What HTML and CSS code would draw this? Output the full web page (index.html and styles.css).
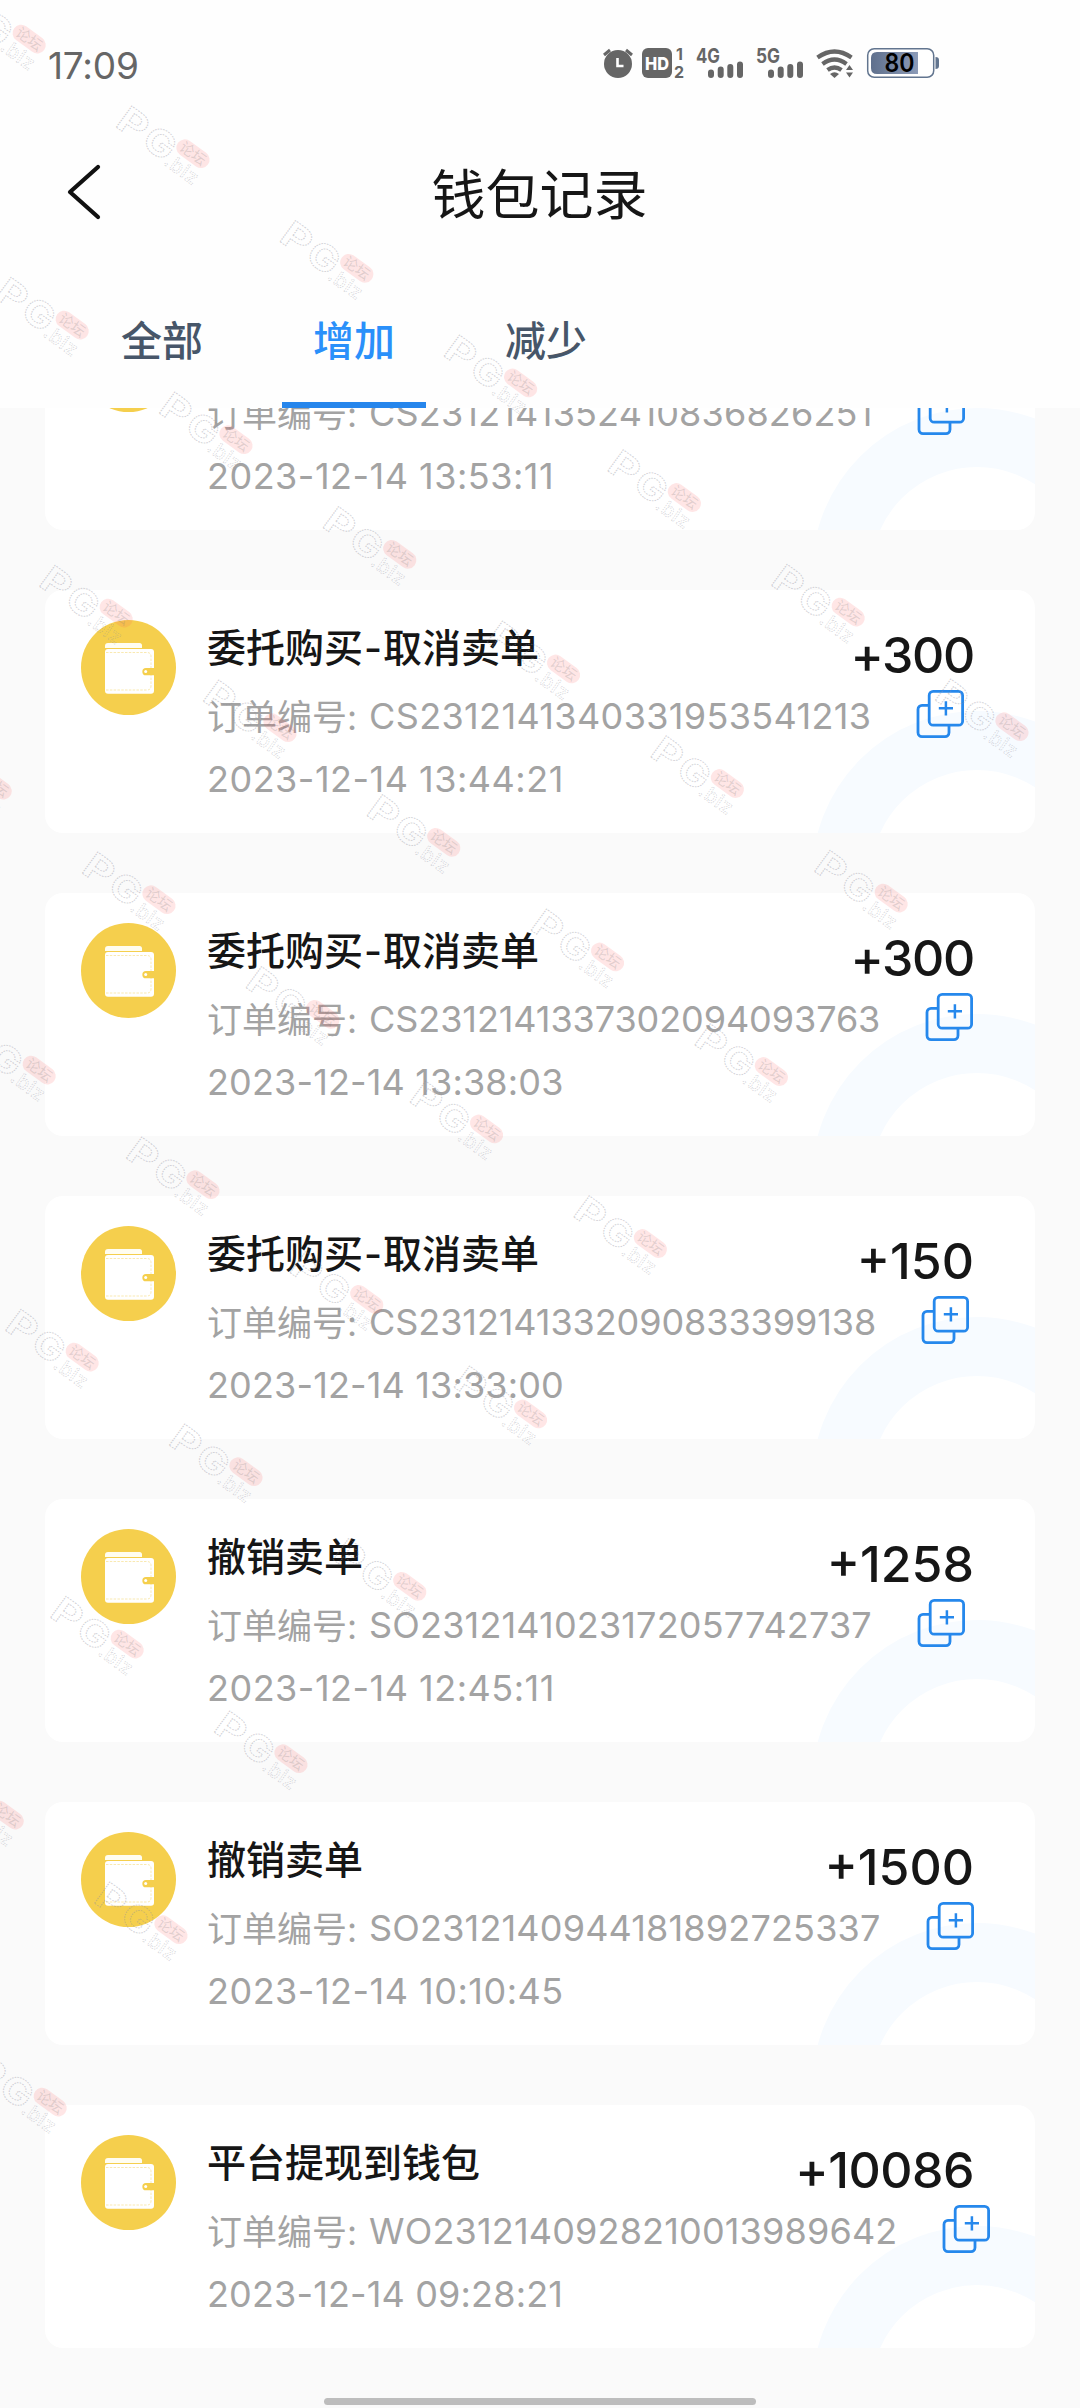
FILE: index.html
```html
<!DOCTYPE html>
<html lang="zh-CN">
<head>
    <meta charset="UTF-8">
    <meta name="viewport" content="width=device-width, initial-scale=1.0">
    <title>钱包记录</title>
    <link rel="stylesheet" href="styles.css">
</head>
<body>
    <!-- Shared icons -->
    <svg class="sprite" width="0" height="0">
        <symbol id="wallet" viewBox="0 0 95 95">
            <circle cx="47.5" cy="47.5" r="47.5" fill="#f5cf4d"/>
            <path d="M24 28V26a3 3 0 0 1 3-3h31.500a2.500 2.500 0 0 1 2.500 2.500V28z" fill="#fffdf0"/>
            <rect x="24" y="29" width="49" height="44.800" rx="3" fill="#fff"/>
            <path d="M25 32.500h41q4 0 4 4V66q0 4-4 4H25" fill="none" stroke="#f8e6a8" stroke-width="0.9" stroke-dasharray="2.500 1.300"/>
            <path d="M73 48H65a3.600 3.600 0 0 0 0 7.300H73z" fill="#f5cf4d"/>
            <circle cx="64.700" cy="51.500" r="1.500" fill="#fff"/>
        </symbol>
        <symbol id="copy" viewBox="0 0 48 48">
            <g fill="none" stroke="#2688ec" stroke-width="2.800">
                <path d="M12 15.400H6a4 4 0 0 0-4 4V42.600a4 4 0 0 0 4 4H29a4 4 0 0 0 4-4V36"/>
                <rect x="13.200" y="1.400" width="33.400" height="33.800" rx="4"/>
                <path d="M22.800 18.200H37M29.900 11.200V25.400" stroke-width="2.500"/>
            </g>
        </symbol>
        <symbol id="mark" viewBox="0 0 96 80" overflow="visible">
            <g transform="translate(-2 0) rotate(36)" font-family="Inter, sans-serif">
                <g fill="none" stroke="#8f8f9c" stroke-opacity="0.4" stroke-width="1" stroke-dasharray="1.500 1" font-weight="700">
                    <text x="13" y="17.500" font-size="36" textLength="29" lengthAdjust="spacingAndGlyphs">P</text>
                    <text x="45" y="17.500" font-size="36" textLength="31" lengthAdjust="spacingAndGlyphs">G</text>
                    <text x="75" y="20" font-size="20" font-weight="500" textLength="37" stroke-width="0.7">.biz</text>
                </g>
                <rect x="75" y="-14.500" width="37" height="17" rx="8.500" fill="#ff5a5a" fill-opacity="0.15"/>
                <text x="79" y="-1" font-size="14.500" font-family="Noto Sans CJK SC, sans-serif" fill="#777" fill-opacity="0.22">论坛</text>
            </g>
        </symbol>
    </svg>

    <div class="header">
        <div class="status-bar">
            <span class="time">17:09</span>
            <div class="status-icons">
                <svg width="27" height="30" viewBox="0 0 27 30">
                    <circle cx="15" cy="16" r="14" fill="#666"/>
                    <path d="M1 7L7 2M29 7L23 2" stroke="#666" stroke-width="3"/>
                    <path d="M14.500 10V18H20.500" fill="none" stroke="#fff" stroke-width="2.600"/>
                </svg>
                <svg width="42" height="30" viewBox="0 0 42 30">
                    <rect width="30" height="30" rx="6" fill="#666"/>
                    <text x="3" y="22" font-size="18" font-weight="800" fill="#fff" textLength="24" lengthAdjust="spacingAndGlyphs">HD</text>
                    <text x="34" y="12" font-size="16" font-weight="700" fill="#666">1</text>
                    <text x="32" y="29.500" font-size="16" font-weight="700" fill="#666">2</text>
                </svg>
                <svg width="48" height="30" viewBox="0 0 48 30">
                    <text x="0" y="14.500" font-size="20" font-weight="700" textLength="24" lengthAdjust="spacingAndGlyphs" fill="#666">4G</text>
                    <path d="M15 24.500V27M24.700 21.500V27M34.300 19V27M44 16.500V27" stroke="#666" stroke-width="6" stroke-linecap="round"/>
                </svg>
                <svg width="48" height="30" viewBox="0 0 48 30">
                    <text x="0" y="14.500" font-size="20" font-weight="700" textLength="24" lengthAdjust="spacingAndGlyphs" fill="#666">5G</text>
                    <path d="M15 24.500V27M24.700 21.500V27M34.300 19V27M44 16.500V27" stroke="#666" stroke-width="6" stroke-linecap="round"/>
                </svg>
                <svg width="39" height="30" viewBox="0 0 39 30">
                    <g fill="none" stroke="#666" stroke-width="4.200">
                        <path d="M1.500 9.500Q18.500-2.500 35.500 9.500"/>
                        <path d="M6.500 16Q18.500 7 30.500 16"/>
                        <path d="M11.500 22Q18.500 17 25.500 22"/>
                    </g>
                    <path d="M14 26Q18.500 22.500 23 26L18.500 30z" fill="#666"/>
                    <path d="M30 22L33.500 17L37 22zM30 24.500L33.500 29.500L37 24.500z" fill="#666"/>
                </svg>
                <svg width="72" height="30" viewBox="0 0 72 30">
                    <defs>
                        <linearGradient id="charge">
                            <stop offset="0" stop-color="#5f708d"/>
                            <stop offset="1" stop-color="#8c9bb8"/>
                        </linearGradient>
                    </defs>
                    <rect x="0.700" y="0.700" width="66" height="28.600" rx="6.500" fill="#fff" stroke="#62758f" stroke-width="1.500"/>
                    <path d="M51 4V26H10Q4 26 4 20V10Q4 4 10 4z" fill="url(#charge)"/>
                    <path d="M68.500 9Q72 9 72 12V18Q72 21 68.500 21z" fill="#62758f"/>
                    <text x="17.500" y="24" font-size="25" font-weight="600" textLength="30" lengthAdjust="spacingAndGlyphs" fill="#000">80</text>
                </svg>
            </div>
        </div>
        <div class="nav">
            <svg class="back" width="36" height="56" viewBox="0 0 36 56">
                <path d="M32 3L4 28L32 53" fill="none" stroke="#111" stroke-width="4.200" stroke-linecap="round" stroke-linejoin="round"/>
            </svg>
            <h1>钱包记录</h1>
        </div>
        <div class="tabs">
            <div class="tab">全部</div>
            <div class="tab active">增加</div>
            <div class="tab">减少</div>
        </div>
    </div>

    <div class="list">
        <div class="card">
            <svg class="wallet"><use href="#wallet"/></svg>
            <div class="info">
                <div class="top"></div>
                <div class="order"><span class="label">订单编号:</span><span class="num">CS2312141352410836826251</span><svg class="copy"><use href="#copy"/></svg></div>
                <div class="date wide">2023-12-14 13:53:11</div>
            </div>
        </div>
        <div class="card">
            <svg class="wallet"><use href="#wallet"/></svg>
            <div class="info">
                <div class="top"><span class="name">委托购买<i>-</i>取消卖单</span><span class="amount narrow">+300</span></div>
                <div class="order"><span class="label">订单编号:</span><span class="num wide">CS2312141340331953541213</span><svg class="copy"><use href="#copy"/></svg></div>
                <div class="date wide">2023-12-14 13:44:21</div>
            </div>
        </div>
        <div class="card">
            <svg class="wallet"><use href="#wallet"/></svg>
            <div class="info">
                <div class="top"><span class="name">委托购买<i>-</i>取消卖单</span><span class="amount narrow">+300</span></div>
                <div class="order"><span class="label">订单编号:</span><span class="num narrow">CS2312141337302094093763</span><svg class="copy"><use href="#copy"/></svg></div>
                <div class="date">2023-12-14 13:38:03</div>
            </div>
        </div>
        <div class="card">
            <svg class="wallet"><use href="#wallet"/></svg>
            <div class="info">
                <div class="top"><span class="name">委托购买<i>-</i>取消卖单</span><span class="amount">+150</span></div>
                <div class="order"><span class="label">订单编号:</span><span class="num narrow">CS2312141332090833399138</span><svg class="copy"><use href="#copy"/></svg></div>
                <div class="date">2023-12-14 13:33:00</div>
            </div>
        </div>
        <div class="card">
            <svg class="wallet"><use href="#wallet"/></svg>
            <div class="info">
                <div class="top"><span class="name">撤销卖单</span><span class="amount">+1258</span></div>
                <div class="order"><span class="label">订单编号:</span><span class="num">SO2312141023172057742737</span><svg class="copy"><use href="#copy"/></svg></div>
                <div class="date wide">2023-12-14 12:45:11</div>
            </div>
        </div>
        <div class="card">
            <svg class="wallet"><use href="#wallet"/></svg>
            <div class="info">
                <div class="top"><span class="name">撤销卖单</span><span class="amount">+1500</span></div>
                <div class="order"><span class="label">订单编号:</span><span class="num">SO2312140944181892725337</span><svg class="copy"><use href="#copy"/></svg></div>
                <div class="date wide">2023-12-14 10:10:45</div>
            </div>
        </div>
        <div class="card">
            <svg class="wallet"><use href="#wallet"/></svg>
            <div class="info">
                <div class="top"><span class="name">平台提现到钱包</span><span class="amount long">+10086</span></div>
                <div class="order"><span class="label">订单编号:</span><span class="num">WO2312140928210013989642</span><svg class="copy"><use href="#copy"/></svg></div>
                <div class="date">2023-12-14 09:28:21</div>
            </div>
        </div>
    </div>

    <div class="home-bar"></div>

    <!-- Watermark layer -->
    <svg class="watermark" width="1080" height="2408" viewBox="0 0 1080 2408"></svg>

    <script>
        // first mark of each diagonal: x, y, how many
        const rows = [
            [-48, -11, 7], [-5, 275, 6], [39, 563, 5], [-82, 735, 5],
            [-38, 1020, 4], [5, 1307, 3], [50, 1594, 2], [-70, 1765, 2], [-27, 2052, 1]
        ];
        let marks = '';
        rows.forEach(([x, y, count]) => {
            for (let i = 0; i < count; i++) {
                marks += `<use href="#mark" x="${x + i * 163.8}" y="${y + i * 114.6}" width="96" height="80"/>`;
            }
        });
        document.querySelector('.watermark').innerHTML = marks;
    </script>
</body>
</html>
```
FILE: styles.css
```css
*,
*::before {
    box-sizing: border-box;
}

body {
    position: relative;
    display: flex;
    flex-direction: column;
    width: 1080px;
    height: 2408px;
    margin: 0;
    overflow: hidden;
    font-family: Inter, "Noto Sans CJK SC", sans-serif;
    background-color: #fafafa;
    color: #161616;
}

svg {
    display: block;
    flex: none;
    overflow: visible;
}

.sprite {
    position: absolute;
}

/* Header */
.header {
    flex: none;
    height: 408px;
    background-color: #fefefe;
}

.status-bar {
    display: flex;
    justify-content: space-between;
    align-items: center;
    height: 126px;
    padding: 0 141px 0 48px;
}

.time {
    margin-top: 4px;
    font-size: 37px;
    letter-spacing: -0.2px;
    color: #666;
}

.status-icons {
    display: flex;
    gap: 12px;
}

.nav {
    display: flex;
    align-items: center;
    height: 132px;
    padding: 0 66px;
}

.nav h1 {
    flex: 1;
    margin: 7px 37px 0 0;
    font-size: 54px;
    font-weight: 400;
    line-height: 60px;
    text-align: center;
}

.tabs {
    display: flex;
    gap: 48px;
    height: 150px;
    padding-left: 90px;
}

.tab {
    width: 144px;
    padding-top: 53px;
    font-size: 41px;
    font-weight: 500;
    line-height: 60px;
    text-align: center;
    color: #475669;
}

.tab.active {
    color: #2a90fa;
    border-bottom: 6px solid #2686ec;
}

/* Record list, scrolled partly under the header */
.list {
    flex: 1;
    overflow: hidden;
    padding: 0 45px;
}

.card {
    position: relative;
    display: flex;
    height: 243px;
    margin-bottom: 60px;
    padding: 30px 36px;
    border-radius: 18px;
    overflow: hidden;
    background-color: #fff;
}

.card:first-child {
    margin-top: -121px;
}

/* Pale ring in the corner */
.card::before {
    content: "";
    position: absolute;
    left: 767px;
    top: 121px;
    width: 330px;
    height: 330px;
    border: 59px solid #f7fbff;
    border-radius: 50%;
}

.wallet {
    width: 95px;
    height: 95px;
}

.info {
    position: relative;
    flex: 1;
    margin-left: 31px;
}

.top {
    display: flex;
    justify-content: space-between;
    height: 64px;
    padding-right: 25px;
}

.name {
    font-size: 39px;
    font-weight: 500;
    line-height: 56px;
}

.name i {
    display: inline-block;
    width: 20px;
    font-style: normal;
    text-align: center;
}

.amount {
    font-size: 50px;
    font-weight: 500;
    line-height: 70px;
}

.amount.narrow {
    letter-spacing: -1.3px;
}

.amount.long {
    letter-spacing: -0.5px;
}

.order {
    display: flex;
    align-items: center;
    height: 64px;
    font-size: 36px;
    white-space: nowrap;
    color: #a3a3a3;
}

.label {
    margin-top: -3px;
    font-size: 35px;
}

.num {
    margin-left: 12px;
    letter-spacing: 0.17px;
}

.num.wide {
    letter-spacing: 0.36px;
}

.num.narrow {
    letter-spacing: -0.08px;
}

.copy {
    width: 48px;
    height: 48px;
    margin: -4px 0 0 45px;
}

.date {
    font-size: 36px;
    line-height: 62px;
    letter-spacing: 0.15px;
    color: #a3a3a3;
}

.date.wide {
    letter-spacing: 0.5px;
}

.home-bar {
    flex: none;
    width: 432px;
    height: 7px;
    margin: 0 auto 3px;
    border-radius: 4px;
    background-color: #bdbdbd;
}

.watermark {
    position: absolute;
    left: 0;
    top: 0;
    pointer-events: none;
}
```
